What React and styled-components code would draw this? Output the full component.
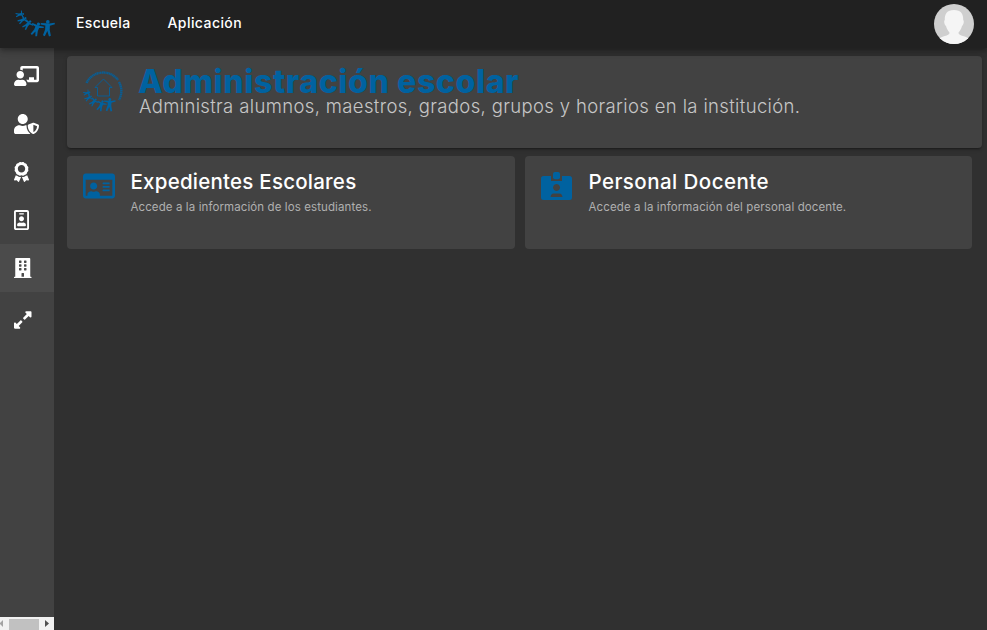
import React from 'react';
import styled, { createGlobalStyle } from 'styled-components';
import { FaChalkboardTeacher, FaUserShield, FaAward, FaRegIdBadge, FaBuilding, FaExpandAlt, FaRegIdCard } from 'react-icons/fa';

const Global = createGlobalStyle`
  *{box-sizing:border-box}
  body{margin:0;background:#303030;color:#fff;font-family:Inter,"Liberation Sans",sans-serif;overflow:hidden}
`;
const Page = styled.div`display:flex;flex-direction:column;height:630px;`;
const Header = styled.header`
  display:flex;align-items:center;height:48px;flex:none;padding:0 13px 0 14px;background:#212121;z-index:1;
  box-shadow:0 2px 4px -1px rgba(0,0,0,.2),0 4px 5px rgba(0,0,0,.14),0 1px 10px rgba(0,0,0,.12);
`;
const Logo = styled.svg`width:42px;height:28px;fill:#0062a0;flex:none;`;
const Nav = styled.nav`display:flex;gap:37px;margin-left:20px;flex:1;margin-top:-3px;`;
const NavLink = styled.a`font-size:14px;line-height:20px;font-weight:500;white-space:nowrap;letter-spacing:${p => p.$track}px;`;
const Avatar = styled.svg`width:40px;height:40px;border-radius:50%;display:block;`;
const Body = styled.div`display:flex;flex:1;min-height:0;`;
const Sidebar = styled.aside`width:54px;background:#424242;display:flex;flex-direction:column;flex:none;padding-top:4px;`;
const Item = styled.a`
  height:48px;flex:none;display:flex;align-items:center;padding-left:14px;
  background:${p => (p.$active ? '#4b4b4b' : 'transparent')};margin-top:${p => p.$gap || 0}px;
  svg{width:${p => p.$w}px;height:20px;display:block;flex:none}
`;
const Scrollbar = styled.div`
  margin-top:auto;height:13px;background:#f1f1f1;display:flex;align-items:center;flex:none;
  svg{display:block}
`;
const Thumb = styled.div`width:30px;height:11px;background:#c1c1c1;margin:1px 6px 0 6px;`;
const Main = styled.main`flex:1;padding:8px 5px 0 13px;`;
const Banner = styled.section`
  height:92px;background:#424242;border-radius:4px;display:flex;padding:15px 16px;
  box-shadow:0 3px 1px -2px rgba(0,0,0,.2),0 2px 2px rgba(0,0,0,.14),0 1px 5px rgba(0,0,0,.12);
`;
const Seal = styled.svg`width:40px;height:42px;fill:#0062a0;stroke:#0062a0;flex:none;`;
const BannerText = styled.div`margin:-5px 0 0 16px;white-space:nowrap;`;
const Title = styled.h1`margin:0 0 0 -1px;font-size:32px;line-height:32px;font-weight:800;color:#0062a0;letter-spacing:.63px;`;
const Subtitle = styled.p`margin:0;font-size:18.500px;line-height:16px;font-weight:300;color:#c6c6c6;letter-spacing:.36px;`;
const Cards = styled.div`display:grid;grid-template-columns:448px 447px;column-gap:10px;margin-top:8px;`;
const Card = styled.article`height:93px;background:#424242;border-radius:4px;display:flex;padding:14px 16px;`;
const CardIcon = styled.div`
  width:32px;height:32px;color:#0062a0;flex:none;
  svg{display:block;width:32px;height:32px}
`;
const CardText = styled.div`margin-left:15.500px;white-space:nowrap;`;
const CardTitle = styled.h2`margin:0;font-size:20.500px;line-height:24px;font-weight:450;letter-spacing:${p => p.$track}px;`;
const CardNote = styled.p`margin:6px 0 0;font-size:11.500px;line-height:14px;color:#b0b0b0;letter-spacing:${p => p.$track}px;`;

/* A standing figure with outstretched arms, centred on its chest. */
const Person = ({ at, size, turn }) => (
  <g transform={`translate(${at}) rotate(${turn}) scale(${size})`} stroke="none">
    <circle cx="0" cy="-8" r="2.400" />
    <path d="M-2-6H2L9-7.500 9.500-5.500 3-3 3 2 5 10 2.500 11 0 4-3 11-5.500 10-3 2-3-3-9.500-4-9-6Z" />
  </g>
);
const FamilyLogo = () => (
  <Logo viewBox="14 10 42 28">
    <Person at="20 14.500" size=".4" turn="80" />
    <Person at="22.500 20" size=".44" turn="57" />
    <Person at="27.500 24.500" size=".5" turn="42" />
    <Person at="36.500 29" size=".66" turn="22" />
    <Person at="47.500 28" size=".76" turn="3" />
  </Logo>
);
const SchoolSeal = () => (
  <Seal viewBox="83 71 40 42">
    <path d="M86.500 83A18.500 18.500 0 0 1 118 80" fill="none" strokeWidth="2.400" strokeDasharray="1.600 .4 1.200 .3" opacity=".85" />
    <path d="M119 82A18.500 18.500 0 0 1 119 100" fill="none" strokeWidth="2.400" strokeDasharray="1.600 .4" opacity=".85" />
    <path d="M95 87.500 103.500 79 112 87.500H109.500V96H97.500V87.500Z" fill="none" strokeWidth="1" opacity=".85" />
    <Person at="87 93" size=".34" turn="75" />
    <Person at="88.500 98" size=".37" turn="57" />
    <Person at="93.500 102" size=".42" turn="42" />
    <Person at="101 105.500" size=".52" turn="22" />
    <Person at="109.500 104.500" size=".62" turn="4" />
  </Seal>
);
const StaffBadge = () => (
  <svg viewBox="0 0 32 32" fill="currentColor">
    <path fillRule="evenodd" d="M2.500 6H10V11H21V6H28.500Q31 6 31 8.500V27.500Q31 30 28.500 30H2.500Q0 30 0 27.500V8.500Q0 6 2.500 6ZM15.500 14A3.500 3.500 0 1 0 15.600 14ZM9.500 27H21.500Q21 23.500 18.500 23.500H12.500Q10 23.500 9.500 27Z" />
    <rect x="12" y="2" width="7" height="7.300" rx="2" />
  </svg>
);

export default function App() {
  return (
    <Page>
      <Global />
      <Header>
        <FamilyLogo />
        <Nav>
          <NavLink $track={0.33}>Escuela</NavLink>
          <NavLink $track={0.43}>Aplicación</NavLink>
        </Nav>
        <Avatar viewBox="0 0 40 40">
          <rect width="40" height="40" fill="#cfcfcf" />
          <path d="M20 6C13 6 10.500 10 10.800 16 9.500 17 10.500 21 12 22 13 26 15.500 28 15.500 29 15.500 32 7 32 5 35V40H35V35C33 32 24.500 32 24.500 29 24.500 28 27 26 28 22 29.500 21 30.500 17 29.200 16 29.500 10 27 6 20 6Z" fill="#f5f5f5" />
        </Avatar>
      </Header>
      <Body>
        <Sidebar>
          <Item $w={25}><FaChalkboardTeacher /></Item>
          <Item $w={25}><FaUserShield /></Item>
          <Item $w={15}><FaAward /></Item>
          <Item $w={15}><FaRegIdBadge /></Item>
          <Item $w={17.5} $active><FaBuilding /></Item>
          <Item $w={17.5} $gap={4}><FaExpandAlt /></Item>
          <Scrollbar>
            <svg width="3" height="7" fill="#a3a3a3"><path d="M3 0V7L0 4V3Z" /></svg>
            <Thumb />
            <svg width="4" height="7" fill="#505050"><path d="M0 0V7L4 3.500Z" /></svg>
          </Scrollbar>
        </Sidebar>
        <Main>
          <Banner>
            <SchoolSeal />
            <BannerText>
              <Title>Administración escolar</Title>
              <Subtitle>Administra alumnos, maestros, grados, grupos y horarios en la institución.</Subtitle>
            </BannerText>
          </Banner>
          <Cards>
            <Card>
              <CardIcon><FaRegIdCard /></CardIcon>
              <CardText>
                <CardTitle $track={0.23}>Expedientes Escolares</CardTitle>
                <CardNote $track={0.1}>Accede a la información de los estudiantes.</CardNote>
              </CardText>
            </Card>
            <Card>
              <CardIcon><StaffBadge /></CardIcon>
              <CardText>
                <CardTitle $track={0.45}>Personal Docente</CardTitle>
                <CardNote $track={0.12}>Accede a la información del personal docente.</CardNote>
              </CardText>
            </Card>
          </Cards>
        </Main>
      </Body>
    </Page>
  );
}
